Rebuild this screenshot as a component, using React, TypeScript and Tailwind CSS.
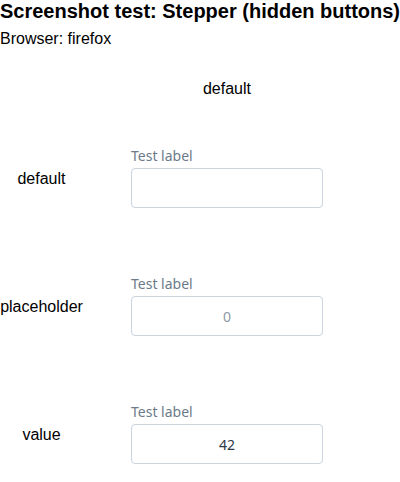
export default function App() {
  const rows = [
    { name: 'default', value: '', placeholder: '' },
    { name: 'placeholder', value: '', placeholder: '0' },
    { name: 'value', value: '42', placeholder: '' },
  ];

  return (
    <div className="w-[400px] bg-white text-black font-['Liberation_Sans',Arial,sans-serif]">
      <h1 className="text-[20px] leading-[23px] font-bold whitespace-nowrap">Screenshot test: Stepper (hidden buttons)</h1>
      <p className="mt-[7px] text-[16px] leading-[18px]">Browser: firefox</p>

      {/* Header */}
      <div className="flex mt-[32px] h-[18px] items-center">
        <div className="w-[83px]" />
        <div className="w-[192px] ml-[48px] text-center text-[16px] leading-[18px]">default</div>
      </div>

      {/* Rows */}
      <div className="flex flex-col gap-[66px] mt-[48px]">
        {rows.map((row) => (
          <div key={row.name} className="flex items-center">
            <div className="w-[83px] mt-[4px] text-center text-[16px] leading-[18px]">{row.name}</div>
            <div className="w-[192px] ml-[48px] flex flex-col gap-[2px] font-['Noto_Sans',sans-serif]">
              <label className="text-[14px] leading-[20px] text-[#6c7a89]">Test label</label>
              <input
                readOnly
                value={row.value}
                placeholder={row.placeholder}
                className="h-[40px] w-full rounded-[4px] border border-[#c9d4df] bg-white text-center text-[14px] text-[#2d3a48] placeholder:text-[#8d9aa8] outline-none"
              />
            </div>
          </div>
        ))}
      </div>
    </div>
  );
}
